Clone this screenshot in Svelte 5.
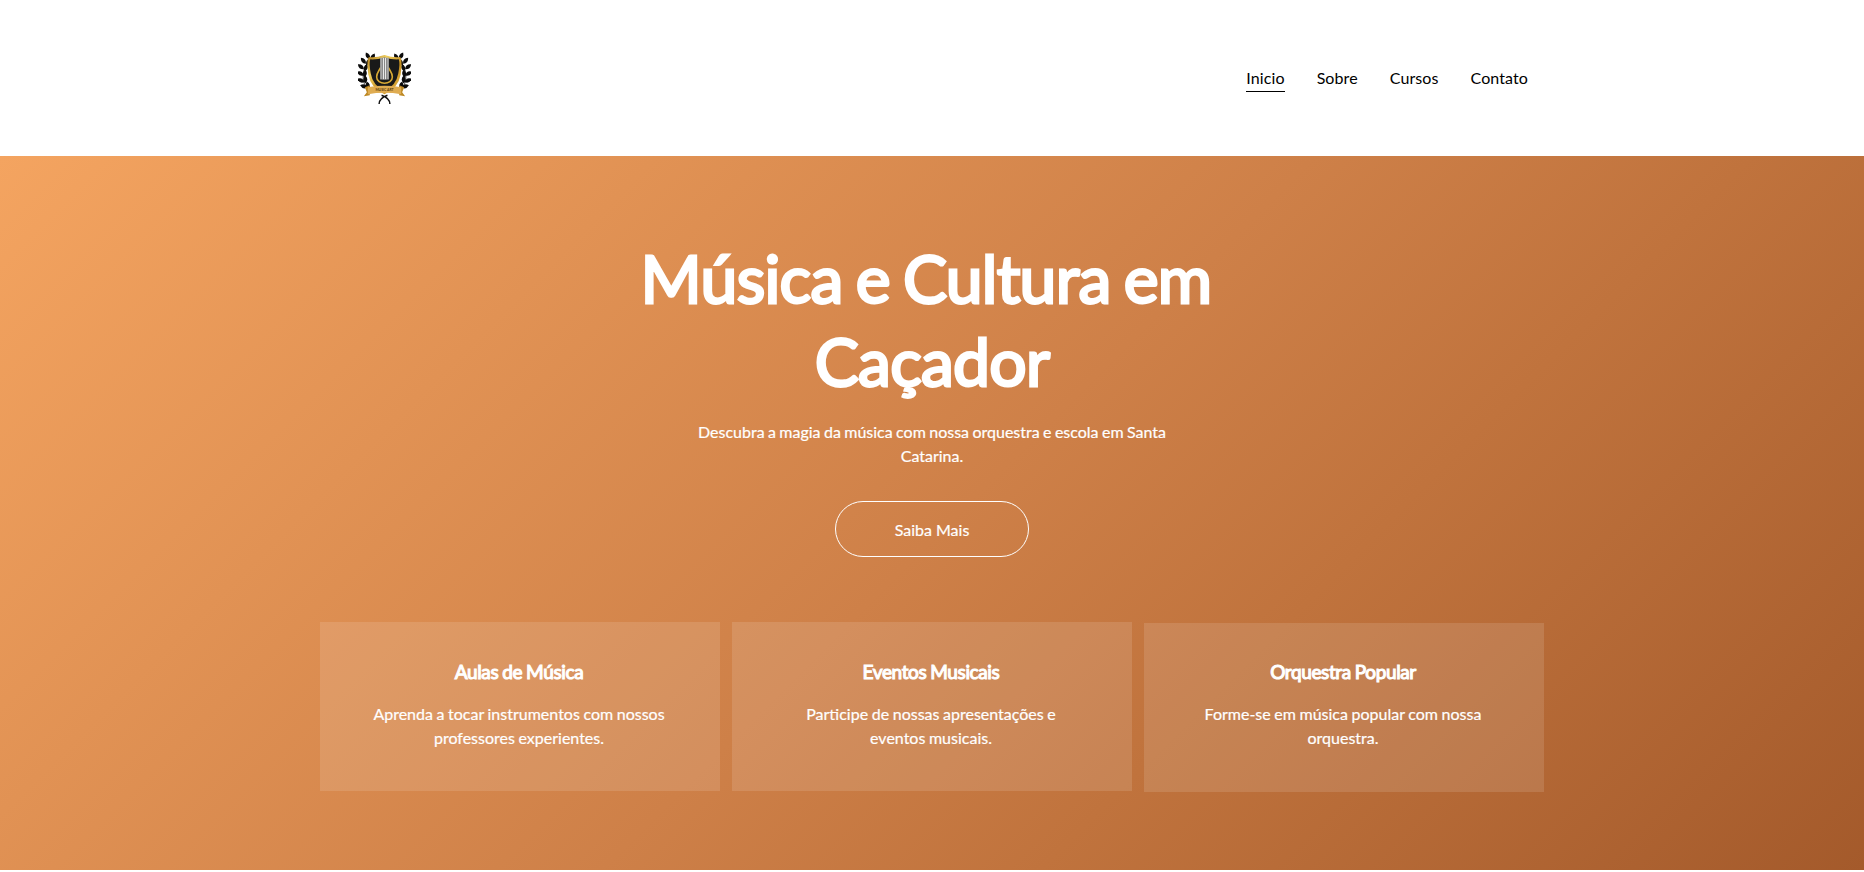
<script lang="ts">
	const links = ['Inicio', 'Sobre', 'Cursos', 'Contato'];
	const active = 'Inicio';

	const cards = [
		{ title: 'Aulas de Música', text: 'Aprenda a tocar instrumentos com nossos professores experientes.' },
		{ title: 'Eventos Musicais', text: 'Participe de nossas apresentações e eventos musicais.' },
		{ title: 'Orquestra Popular', text: 'Forme-se em música popular com nossa orquestra.' }
	];

	// x, y and rotation of the laurel leaves on the left half
	const leaves = [
		[15, 5, 30], [10, 4, -30], [10.5, 10, 30], [5.5, 9, -40],
		[8, 16, 20], [3, 15, -50], [7, 22, 10], [2.5, 22, -60],
		[7.5, 28, 0], [3, 29, -65], [10, 34, -15], [6, 35, -75]
	];
</script>

<header>
	<div class="bar">
		<a class="logo" href="#inicio" aria-label="Inicio">
			<svg viewBox="0 0 54 54">
				<defs>
					<linearGradient id="gold" x1="0" y1="0" x2="1" y2="1">
						<stop offset="0" stop-color="#a87416" />
						<stop offset="0.3" stop-color="#f0ce5c" />
						<stop offset="0.6" stop-color="#c48e20" />
						<stop offset="1" stop-color="#edc052" />
					</linearGradient>
					<linearGradient id="strings">
						<stop offset="0" stop-color="#999" />
						<stop offset="0.5" stop-color="#fff" />
						<stop offset="1" stop-color="#999" />
					</linearGradient>
					<g id="laurel">
						<path d="M14 5Q-2 24 11 40" fill="none" stroke="#111" stroke-width="0.8" />
						{#each leaves as [x, y, r]}
							<path d="M0-4Q4 0 0 4Q-4 0 0-4Z" transform="translate({x} {y}) rotate({r})" fill="#0b0b0b" />
						{/each}
					</g>
				</defs>
				<use href="#laurel" />
				<use href="#laurel" transform="translate(54 0) scale(-1 1)" />
				<path d="M21.5 53Q21.5 47 30 44M32.5 53Q32.5 47 24 44" fill="none" stroke="#111" stroke-width="1.5" />
				<path d="M27 3Q36 6 43 5Q45.500 9 43.5 23Q41 37 27 43Q13 37 10.5 23Q8.5 9 11 5Q18 6 27 3Z" fill="url(#gold)" />
				<path d="M27 5.5Q35 8 41.5 7.5Q43 12 41 22Q39 34 27 40Q15 34 13 22Q11 12 12.5 7.5Q19 8 27 5.5Z" fill="#191919" />
				<path d="M23 16C21 20 19 21 19 25.5C19 34 35 34 35 25.5C35 21 33 20 31 16" fill="none" stroke="#d9aa34" stroke-width="1.6" />
				<path d="M22.5 5.8H31.5V28H22.5Z" fill="url(#strings)" />
				<path d="M24.7 6V28M27 6V28M29.3 6V28" stroke="#303030" stroke-width="0.6" />
				<path d="M7 36L12 34V44L6 45L9 41ZM47 36L42 34V44L48 45L45 41Z" fill="#bd8823" />
				<path d="M10 36Q27 33 44 36V43Q27 40 10 43Z" fill="#dfac51" />
				<text x="27" y="39.5" text-anchor="middle">MUSIC ART</text>
			</svg>
		</a>
		<nav>
			{#each links as link}
				<a href="#{link.toLowerCase()}" class:active={link === active}>{link}</a>
			{/each}
		</nav>
	</div>
</header>

<section class="hero">
	<h1><span>Música e Cultura em</span> Caçador</h1>
	<p class="lead">Descubra a magia da música com nossa orquestra e escola em Santa Catarina.</p>
	<a class="button" href="#sobre">Saiba Mais</a>
	<div class="cards">
		{#each cards as card}
			<article class="card">
				<h3>{card.title}</h3>
				<p>{card.text}</p>
			</article>
		{/each}
	</div>
</section>

<style>
	:global(body) {
		background: #fff;
		font-family: Lato, sans-serif;
		font-size: 16px;
		overflow: hidden;
	}

	a {
		color: inherit;
		text-decoration: none;
	}

	header {
		height: 156px;
		display: flex;
		justify-content: center;
	}

	.bar {
		width: 1172px;
		display: flex;
		align-items: center;
		justify-content: space-between;
	}

	.logo,
	.logo svg {
		display: block;
		width: 53px;
		height: 53px;
	}

	.logo {
		margin-left: 12px;
	}

	.logo text {
		font: bold 3.5px Lato, sans-serif;
		fill: #5b3b0c;
	}

	nav {
		display: flex;
		gap: 32px;
		margin: 1px -10px 0 0;
		color: #000;
		line-height: 24px;
		letter-spacing: 0.1px;
	}

	nav a {
		padding-bottom: 1px;
		border-bottom: 1px solid transparent;
	}

	nav a.active {
		border-color: #000;
	}

	.hero {
		box-sizing: border-box;
		height: 713.5px;
		padding-top: 80px;
		display: flex;
		flex-direction: column;
		align-items: center;
		background: linear-gradient(135deg, #f4a460, #ce8048 51%, #c0733d 68%, #a45a2b);
		color: #fff;
		text-align: center;
	}

	h1 {
		width: 600px;
		margin: 0;
		font-size: 66px;
		font-weight: 400;
		line-height: 83px;
		letter-spacing: -0.011em;
		word-spacing: -3px;
		-webkit-text-stroke: 2.8px #fff;
	}

	h1 span {
		margin-right: 12px;
	}

	.lead {
		width: 500px;
		margin: 18px 0 33px;
		line-height: 24px;
		word-spacing: -0.7px;
	}

	.lead,
	.button,
	.card p {
		-webkit-text-stroke: 0.2px #fff;
	}

	.button {
		box-sizing: border-box;
		width: 194px;
		height: 56px;
		border: 1px solid #fff;
		border-radius: 28px;
		line-height: 55px;
	}

	.cards {
		display: grid;
		grid-template-columns: repeat(3, 400px);
		gap: 12px;
		margin-top: 65px;
	}

	.card {
		box-sizing: border-box;
		height: 169px;
		padding: 36px 49px 0 47px;
		background: rgba(255, 255, 255, 0.12);
	}

	.card:last-child {
		margin-top: 1px;
		padding-top: 35px;
	}

	.card h3 {
		margin: 0 0 17px;
		font-size: 19px;
		font-weight: 400;
		line-height: 27px;
		letter-spacing: -0.02em;
		word-spacing: -0.5px;
		-webkit-text-stroke: 1.1px #fff;
	}

	.card p {
		margin: 0;
		line-height: 24px;
		word-spacing: -0.5px;
	}
</style>
